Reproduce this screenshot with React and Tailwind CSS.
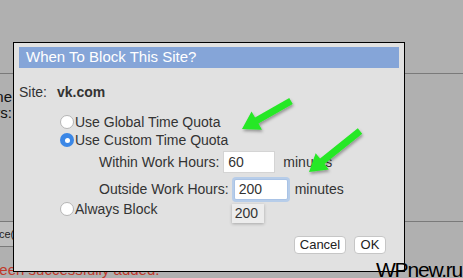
import React from 'react';

const arrowPoints = (x1, y1, x2, y2, shaft = 7, headW = 21, headL = 17) => {
  const len = Math.hypot(x2 - x1, y2 - y1);
  const ux = (x2 - x1) / len;
  const uy = (y2 - y1) / len;
  const nx = -uy;
  const ny = ux;
  const bx = x2 - ux * headL;
  const by = y2 - uy * headL;
  const pts = [
    [x1 + (nx * shaft) / 2, y1 + (ny * shaft) / 2],
    [bx + (nx * shaft) / 2, by + (ny * shaft) / 2],
    [bx + (nx * headW) / 2, by + (ny * headW) / 2],
    [x2, y2],
    [bx - (nx * headW) / 2, by - (ny * headW) / 2],
    [bx - (nx * shaft) / 2, by - (ny * shaft) / 2],
    [x1 - (nx * shaft) / 2, y1 - (ny * shaft) / 2],
  ];
  return pts.map((p) => p.join(',')).join(' ');
};

const Radio = ({ checked }) =>
  checked ? (
    <span className="w-[14px] h-[14px] rounded-full bg-[#3b87e6] flex items-center justify-center shrink-0">
      <span className="w-[5px] h-[5px] rounded-full bg-white" />
    </span>
  ) : (
    <span className="w-[14px] h-[14px] rounded-full bg-white border border-[#b5b5b5] shrink-0" />
  );

const Option = ({ checked, label }) => (
  <div className="h-[18px] flex items-center ml-[46px]">
    <Radio checked={checked} />
    <span className="ml-[1px]">{label}</span>
  </div>
);

const App = () => {
  return (
    <div className="relative w-[463px] h-[278px] overflow-hidden bg-[#b0b0b0] font-['Liberation_Sans',Arial,sans-serif] text-[14px] text-[#333]">
      {/* page behind the dialog */}
      <div className="flex flex-col">
        <div className="h-[73px]" />
        <div className="h-[1px] bg-[#7a7a7a]" />
        <div className="h-[147px] pt-[15px]">
          <div className="w-[13px] overflow-hidden flex flex-col items-end pr-[1px] text-[#111] leading-[16px] text-[15px]">
            <span className="whitespace-nowrap">Zone</span>
            <span className="whitespace-nowrap">Hours:</span>
          </div>
        </div>
        <div className="h-[1px] bg-[#7a7a7a]" />
        <div className="h-[24px] w-[40px] bg-[#bdbdbd] flex items-center overflow-hidden">
          <span className="whitespace-nowrap text-[#222] text-[11px] ml-[-1px]">ce(s)</span>
        </div>
        <div className="h-[1px] w-[40px] bg-[#7a7a7a]" />
        <div className="mt-[14px] ml-[-9px] whitespace-nowrap text-[#c0392b] text-[15px] leading-[18px]">
          been successfully added.
        </div>
      </div>

      {/* dialog */}
      <div className="absolute left-[13px] top-[42px] w-[392px] h-[230px] border border-black bg-[#e1e1e1] flex flex-col">
        <div className="mt-[4px] mx-[5px] h-[21px] bg-[#85a5d8] flex items-center pl-[7px] text-white text-[15px]">
          When To Block This Site?
        </div>

        <div className="mt-[14px] h-[20px] flex items-center pl-[5px]">
          <span className="w-[38px]">Site:</span>
          <span className="font-bold">vk.com</span>
        </div>

        <div className="mt-[11px] flex flex-col">
          <Option label="Use Global Time Quota" />
          <Option checked label="Use Custom Time Quota" />

          <div className="mt-[2px] h-[22px] flex items-center ml-[85px]">
            <span>Within Work Hours:</span>
            <div className="ml-[4px] w-[52px] h-[22px] bg-white border border-[#d4d4d4] flex items-center pl-[4px]">60</div>
            <span className="ml-[8px]">minutes</span>
          </div>

          <div className="mt-[5px] h-[22px] flex items-center ml-[85px]">
            <span>Outside Work Hours:</span>
            <div className="relative ml-[5px]">
              <div className="w-[54px] h-[21px] bg-white border border-[#a9c3e6] rounded-[2px] shadow-[0_0_0_2px_#b7cde9] flex items-center pl-[4px]">
                200
              </div>
              <div className="absolute left-[-2px] top-[25px] w-[32px] h-[19px] bg-[#ececec] shadow-[0_1px_3px_rgba(0,0,0,0.25)] flex items-center pl-[3px]">
                200
              </div>
            </div>
            <span className="ml-[7px]">minutes</span>
          </div>

          <Option label="Always Block" />
        </div>

        <div className="mt-[18px] flex justify-end gap-[8px] pr-[18px] text-[13px] text-[#222]">
          <button className="w-[52px] h-[18px] bg-white border border-[#c6c6c6] rounded-[4px] flex items-center justify-center">
            Cancel
          </button>
          <button className="w-[32px] h-[18px] bg-white border border-[#c6c6c6] rounded-[4px] flex items-center justify-center">
            OK
          </button>
        </div>
      </div>

      {/* annotation arrows */}
      <svg className="absolute left-0 top-0" width="463" height="278">
        <defs>
          <filter id="sh" x="-20%" y="-20%" width="140%" height="140%">
            <feDropShadow dx="1" dy="2" stdDeviation="1.5" floodColor="#000" floodOpacity="0.35" />
          </filter>
        </defs>
        <polygon points={arrowPoints(291, 101, 242, 129)} fill="#26e826" filter="url(#sh)" />
        <polygon points={arrowPoints(360, 131, 309, 172)} fill="#26e826" filter="url(#sh)" />
      </svg>

      {/* watermark */}
      <div className="absolute left-[376px] top-[258px] text-[21px] leading-[24px] tracking-[-1.2px] text-black whitespace-nowrap">
        WPnew.ru
      </div>
    </div>
  );
};

export default App;
